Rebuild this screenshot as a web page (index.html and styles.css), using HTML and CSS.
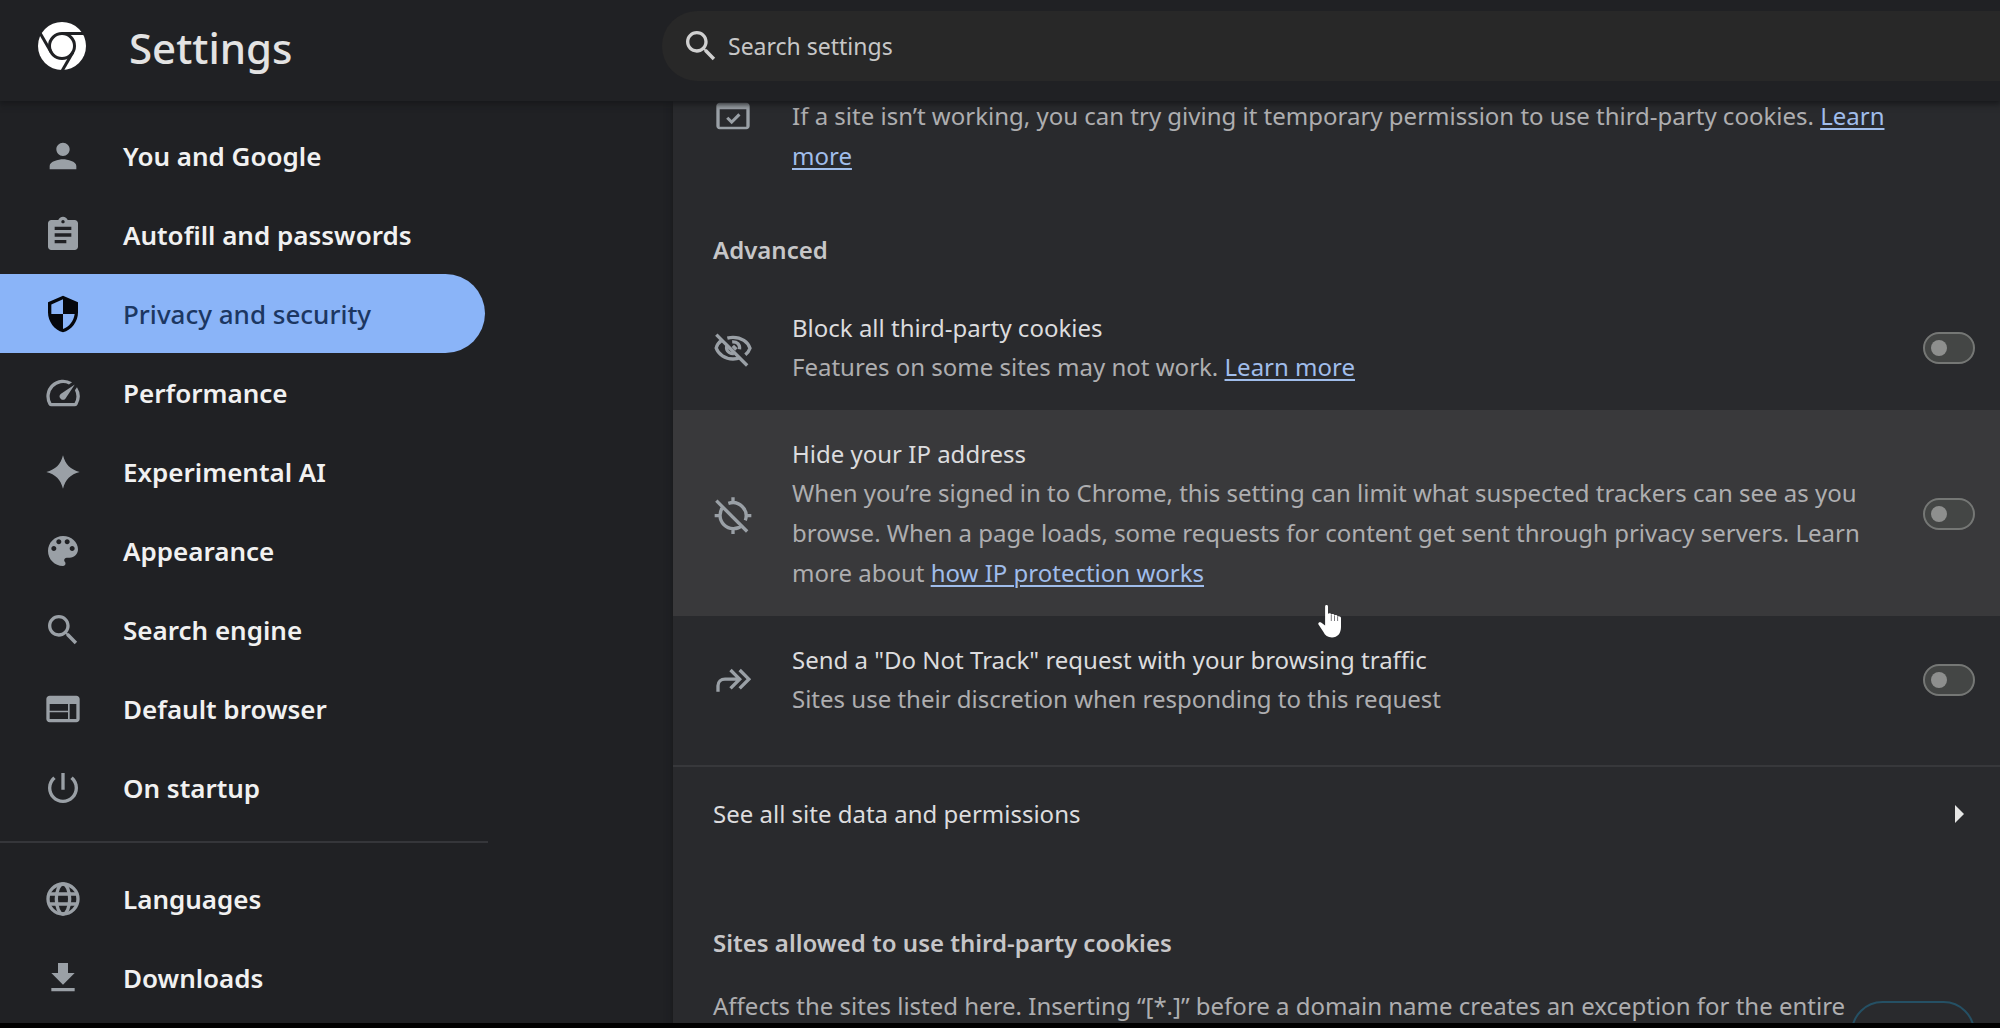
FILE: index.html
```html
<!DOCTYPE html>
<html lang="en">
<head>
<meta charset="utf-8">
<meta name="viewport" content="width=device-width, initial-scale=1">
<title>Settings</title>
<link rel="stylesheet" href="styles.css">
</head>
<body>
<header class="topbar">
  <div class="brand">
    <svg class="logo" viewBox="0 0 48 48" aria-hidden="true">
      <circle cx="24" cy="24" r="24" fill="#fff"/>
      <g fill="none" stroke="#202124" stroke-width="3">
        <circle cx="24" cy="24" r="12.5"/>
        <path d="M24 11.5H46"/>
        <path d="M24 11.5H46" transform="rotate(120 24 24)"/>
        <path d="M24 11.5H46" transform="rotate(240 24 24)"/>
      </g>
    </svg>
    <h1 class="title">Settings</h1>
  </div>
  <label class="search">
    <svg class="icon" viewBox="0 0 24 24" aria-hidden="true"><path d="M15.500 14h-.79l-.28-.27C15.410 12.590 16 11.110 16 9.500 16 5.910 13.090 3 9.500 3S3 5.910 3 9.500 5.910 16 9.500 16c1.610 0 3.090-.59 4.230-1.570l.27.28v.79l5 4.990L20.490 19l-4.990-5zm-6 0C7.010 14 5 11.990 5 9.500S7.010 5 9.500 5 14 7.010 14 9.500 11.990 14 9.500 14z"/></svg>
    <input class="search-input" type="search" placeholder="Search settings" aria-label="Search settings">
  </label>
</header>

<div class="content">
  <nav class="sidebar" aria-label="Settings sections">
    <a class="nav-item" href="#people"><svg class="icon" viewBox="0 0 24 24" aria-hidden="true"><path d="M12 12c2.210 0 4-1.790 4-4s-1.790-4-4-4-4 1.790-4 4 1.790 4 4 4zm0 2c-2.670 0-8 1.340-8 4v2h16v-2c0-2.660-5.330-4-8-4z"/></svg>You and Google</a>
    <a class="nav-item" href="#autofill"><svg class="icon" viewBox="0 0 24 24" aria-hidden="true"><path d="M19 3h-4.180C14.400 1.840 13.300 1 12 1c-1.300 0-2.400.84-2.820 2H5c-1.100 0-2 .9-2 2v14c0 1.100.9 2 2 2h14c1.100 0 2-.9 2-2V5c0-1.100-.9-2-2-2zm-7 0c.55 0 1 .45 1 1s-.45 1-1 1-1-.45-1-1 .45-1 1-1zm2 14H7v-2h7v2zm3-4H7v-2h10v2zm0-4H7V7h10v2z"/></svg>Autofill and passwords</a>
    <a class="nav-item selected" href="#privacy" aria-current="page"><svg class="icon" viewBox="0 0 24 24" aria-hidden="true"><path d="M12 1L3 5v6c0 5.550 3.840 10.740 9 12 5.160-1.260 9-6.450 9-12V5l-9-4zm0 11h7c-.53 4.120-3.280 7.790-7 8.940V12H5V6.300l7-3.110V12z"/></svg>Privacy and security</a>
    <a class="nav-item" href="#performance"><svg class="icon" viewBox="0 0 24 24" aria-hidden="true"><path d="M20.380 8.570l-1.230 1.850a8 8 0 0 1-.22 7.580H5.070A8 8 0 0 1 15.580 6.850l1.850-1.230A10 10 0 0 0 3.350 19a2 2 0 0 0 1.720 1h13.850a2 2 0 0 0 1.740-1 10 10 0 0 0-.27-10.440zM10.590 15.410a2 2 0 0 0 2.830 0l5.660-8.490-8.490 5.660a2 2 0 0 0 0 2.830z"/></svg>Performance</a>
    <a class="nav-item" href="#ai"><svg class="icon" viewBox="0 0 24 24" aria-hidden="true"><path d="M12 2c1.400 5.500 4.500 8.600 10 10-5.500 1.400-8.600 4.500-10 10-1.400-5.500-4.500-8.600-10-10 5.500-1.400 8.600-4.500 10-10z"/></svg>Experimental AI</a>
    <a class="nav-item" href="#appearance"><svg class="icon" viewBox="0 0 24 24" aria-hidden="true"><path d="M12 3c-4.970 0-9 4.030-9 9s4.030 9 9 9c.83 0 1.500-.67 1.500-1.500 0-.39-.15-.74-.39-1.010-.23-.26-.38-.61-.38-.99 0-.83.67-1.500 1.500-1.500H16c2.760 0 5-2.240 5-5 0-4.420-4.030-8-9-8zm-5.500 9c-.83 0-1.500-.67-1.500-1.500S5.670 9 6.500 9 8 9.670 8 10.500 7.330 12 6.500 12zm3-4C8.670 8 8 7.330 8 6.500S8.670 5 9.500 5s1.500.67 1.500 1.500S10.330 8 9.500 8zm5 0c-.83 0-1.500-.67-1.500-1.500S13.670 5 14.500 5s1.500.67 1.500 1.500S15.330 8 14.500 8zm3 4c-.83 0-1.500-.67-1.500-1.500S16.670 9 17.500 9s1.500.67 1.500 1.500-.67 1.500-1.500 1.500z"/></svg>Appearance</a>
    <a class="nav-item" href="#search"><svg class="icon" viewBox="0 0 24 24" aria-hidden="true"><path d="M15.500 14h-.79l-.28-.27C15.410 12.590 16 11.110 16 9.500 16 5.910 13.090 3 9.500 3S3 5.910 3 9.500 5.910 16 9.500 16c1.610 0 3.090-.59 4.230-1.570l.27.28v.79l5 4.990L20.490 19l-4.990-5zm-6 0C7.010 14 5 11.990 5 9.500S7.010 5 9.500 5 14 7.010 14 9.500 11.990 14 9.500 14z"/></svg>Search engine</a>
    <a class="nav-item" href="#browser"><svg class="icon" viewBox="0 0 24 24" aria-hidden="true"><path d="M20 4H4c-1.100 0-2 .9-2 2v12c0 1.100.9 2 2 2h16c1.100 0 2-.9 2-2V6c0-1.100-.9-2-2-2zm-5 14H4v-4h11v4zm0-5H4V9h11v4zm5 5h-4V9h4v9z"/></svg>Default browser</a>
    <a class="nav-item" href="#startup"><svg class="icon" viewBox="0 0 24 24" aria-hidden="true"><path d="M13 3h-2v10h2V3zm4.830 2.170l-1.420 1.420C17.990 7.860 19 9.810 19 12c0 3.870-3.130 7-7 7s-7-3.130-7-7c0-2.190 1.010-4.140 2.580-5.420L6.170 5.170C4.230 6.820 3 9.260 3 12c0 4.970 4.030 9 9 9s9-4.030 9-9c0-2.740-1.230-5.180-3.170-6.830z"/></svg>On startup</a>
    <hr class="nav-divider">
    <a class="nav-item" href="#languages"><svg class="icon line" viewBox="0 0 24 24" aria-hidden="true"><circle cx="12" cy="12" r="9"/><ellipse cx="12" cy="12" rx="4" ry="9"/><path d="M3.500 9h17M3.500 15h17"/></svg>Languages</a>
    <a class="nav-item" href="#downloads"><svg class="icon" viewBox="0 0 24 24" aria-hidden="true"><path d="M19 9h-4V3H9v6H5l7 7 7-7zM5 18v2h14v-2H5z"/></svg>Downloads</a>
  </nav>

  <main class="card">
    <div class="note">
      <svg class="icon" viewBox="0 0 24 24" aria-hidden="true"><path d="M20 4H4c-1.100 0-2 .9-2 2v12c0 1.100.9 2 2 2h16c1.100 0 2-.9 2-2V6c0-1.100-.9-2-2-2zm0 14.500H4V8h16v10.500zM11.200 17l5.300-5.300-1.300-1.300-4 4-2-2-1.300 1.300 3.300 3.300z"/></svg>
      <p class="desc">If a site isn’t working, you can try giving it temporary permission to use third-party cookies. <a class="link" href="#learn">Learn more</a></p>
    </div>

    <h2 class="heading advanced">Advanced</h2>

    <div class="row">
      <svg class="icon line" viewBox="0 -1 24 24" aria-hidden="true"><path d="M5.200 6.400C3.500 7.600 2.300 9.200 1.900 11c1.300 3.800 5.300 6.600 10.100 6.600 1.600 0 3.100-.3 4.400-.8M8.600 5.100c1.100-.3 2.200-.5 3.400-.5 5 0 9 2.700 10.200 6.600-.5 1.500-1.500 2.800-2.800 3.900"/><path d="M8.500 9.200c-1.200 2.700.6 5.400 4 5.100M11.500 7.300c3-.2 4.800 1.700 4.400 4.400M11.900 9.700l2.100 2.200"/><path d="M2 3l18.500 18.500"/></svg>
      <div class="row-text">
        <label class="row-title" for="block">Block all third-party cookies</label>
        <p class="desc">Features on some sites may not work. <a class="link" href="#learn-block">Learn more</a></p>
      </div>
      <input class="toggle" type="checkbox" role="switch" id="block">
    </div>

    <div class="row hovered">
      <svg class="icon line" viewBox="0 -1 24 24" aria-hidden="true"><path d="M9.200 4.600a8 8 0 0 1 10.200 10.200M17.600 17.700A8 8 0 0 1 6.300 6.400M12 1v3M12 20v3M1 12h3M20 12h3M2 3l18.500 18.500"/></svg>
      <div class="row-text">
        <label class="row-title" for="hide-ip">Hide your IP address</label>
        <p class="desc">When you’re signed in to Chrome, this setting can limit what suspected trackers can see as you browse. When a page loads, some requests for content get sent through privacy servers. Learn more about <a class="link" href="#ip">how IP protection works</a></p>
      </div>
      <input class="toggle" type="checkbox" role="switch" id="hide-ip">
      <svg class="pointer" viewBox="0 0 24 33" aria-hidden="true"><path d="M8.500 0c1 0 1.500.7 1.500 1.700v7c.9-.9 3-.7 3.300.7.900-.7 2.900-.4 3.200.9 1-.6 2.900-.2 3.100 1.200 1.300-.8 3.400-.2 3.400 1.600v9c0 6.500-3.500 10.400-9 10.400-4.300 0-7-2-8.700-5.700L.5 19.600c-.8-1.900.9-3.200 2.600-2l4 3V1.700C7.100.7 7.500 0 8.500 0z"/><path d="M13.300 9.500V16M16.500 10.500V16M19.600 11.500V16" stroke="#55565a" stroke-width=".8"/></svg>
    </div>

    <div class="row">
      <svg class="icon line" viewBox="0 0 24 24" aria-hidden="true"><path d="M3 19v-3.500c0-2.500 1.800-4 4.200-4H15M10.500 6l5.500 5.500-5.500 5.500M16 6l5.500 5.500L16 17"/></svg>
      <div class="row-text">
        <label class="row-title" for="dnt">Send a "Do Not Track" request with your browsing traffic</label>
        <p class="desc">Sites use their discretion when responding to this request</p>
      </div>
      <input class="toggle" type="checkbox" role="switch" id="dnt">
    </div>

    <a class="link-row" href="#site-data">See all site data and permissions
      <svg class="arrow" viewBox="0 0 9 18" aria-hidden="true"><path d="M0 0l9 9-9 9z"/></svg>
    </a>

    <h2 class="heading allowed">Sites allowed to use third-party cookies</h2>
    <div class="exceptions">
      <p class="desc">Affects the sites listed here. Inserting “[*.]” before a domain name creates an exception for the entire</p>
      <button class="add" type="button" aria-label="Add"></button>
    </div>
  </main>
</div>
</body>
</html>
```
FILE: styles.css
```css
* {
  box-sizing: border-box;
}

body {
  margin: 0;
  height: 100vh;
  display: flex;
  flex-direction: column;
  overflow: hidden;
  background: #202124;
  border-bottom: 5px solid #000;
  color: #e3e3e3;
  font: 24px/40px "Noto Sans", "Open Sans", sans-serif;
}

h1, h2, p {
  margin: 0;
}

.icon {
  flex: none;
  width: 40px;
  height: 40px;
  fill: #9aa0a6;
}

.line {
  fill: none;
  stroke: #9aa0a6;
  stroke-width: 2;
}

/* Top bar */
.topbar {
  position: relative;
  z-index: 1;
  flex: none;
  display: grid;
  grid-template-columns: 662px 1fr;
  height: 101px;
  padding: 11px 0 20px;
  background: #202124;
  box-shadow: 0 2px 6px 1px #17181b;
}

.brand {
  display: flex;
  align-items: center;
  gap: 43px;
  padding-left: 38px;
}

.logo {
  width: 48px;
  height: 48px;
}

.title {
  padding-top: 4px;
  font-size: 42px;
  font-weight: 500;
}

.search {
  display: flex;
  align-items: center;
  gap: 7px;
  padding-left: 19px;
  border-radius: 35px 0 0 35px;
  background: #282828;
}

.search .icon {
  fill: #d0d0d0;
}

.search-input {
  flex: 1;
  min-width: 0;
  height: 40px;
  padding: 0;
  border: 0;
  outline: 0;
  background: none;
  color: #c7c7c7;
  font: inherit;
  font-size: 23px;
}

.search-input::placeholder {
  color: #c7c7c7;
  opacity: 1;
}

.content {
  flex: 1;
  min-height: 0;
  display: grid;
  grid-template-columns: 488px 1fr;
  gap: 185px;
}

/* Sidebar */
.sidebar {
  padding-top: 15px;
}

.nav-item {
  display: flex;
  align-items: center;
  gap: 40px;
  height: 79px;
  margin-right: 3px;
  padding-left: 43px;
  border-radius: 0 40px 40px 0;
  color: #f1f1f1;
  font-size: 26px;
  font-weight: 600;
  text-decoration: none;
}

.selected {
  background: #8ab4f8;
  color: #1c3762;
  font-weight: 500;
}

.selected .icon {
  fill: #05070c;
}

.nav-divider {
  height: 2px;
  margin: 14px 0 16px;
  border: 0;
  background: #35363a;
}

/* Settings card, scrolled slightly under the top bar */
.card {
  min-width: 0;
  margin-top: -6px;
  background: #292a2d;
  box-shadow: 0 0 6px 1px #18191c;
}

.desc {
  color: #aeaeb0;
}

.link {
  color: #a0bdeb;
  text-decoration-thickness: 2px;
  text-underline-offset: 3px;
}

.note {
  display: flex;
  gap: 39px;
  padding: 1px 100px 0 40px;
}

.heading {
  padding-left: 40px;
  color: #c6c6c8;
  font-size: 24px;
  font-weight: 600;
}

.advanced {
  padding-top: 54px;
  padding-bottom: 14px;
}

.row {
  position: relative;
  display: flex;
  align-items: center;
  padding: 24px 25px 23px 40px;
}

.hovered {
  background: #39393b;
}

.row-text {
  flex: 1;
  min-width: 0;
  margin: 0 39px;
}

.row-title {
  display: block;
  color: #dcdcde;
  line-height: 39px;
}

.toggle {
  appearance: none;
  flex: none;
  display: flex;
  align-items: center;
  width: 52px;
  height: 32px;
  margin: 0;
  padding-left: 6px;
  border: 2px solid #757775;
  border-radius: 16px;
  background: #444645;
}

.toggle::before {
  content: "";
  width: 16px;
  height: 16px;
  border-radius: 8px;
  background: #8e8f8e;
}

.toggle:checked {
  justify-content: flex-end;
  padding: 0 6px 0 0;
}

.pointer {
  position: absolute;
  z-index: 1;
  left: 645px;
  bottom: -22px;
  width: 24px;
  height: 33px;
  fill: #fff;
}

.link-row {
  display: flex;
  align-items: center;
  justify-content: space-between;
  height: 96px;
  margin-top: 23px;
  padding: 0 36px 0 40px;
  border-top: 2px solid #37383b;
  color: #dcdcde;
  text-decoration: none;
}

.arrow {
  width: 9px;
  height: 18px;
  fill: #e6e6e6;
}

.allowed {
  padding-top: 62px;
}

.exceptions {
  display: flex;
  align-items: flex-start;
  padding: 23px 25px 0 40px;
}

.exceptions .desc {
  flex: 1;
  min-width: 0;
}

.add {
  width: 124px;
  height: 63px;
  margin-top: 15px;
  border: 2px solid #255064;
  border-radius: 32px;
  background: none;
}
```
